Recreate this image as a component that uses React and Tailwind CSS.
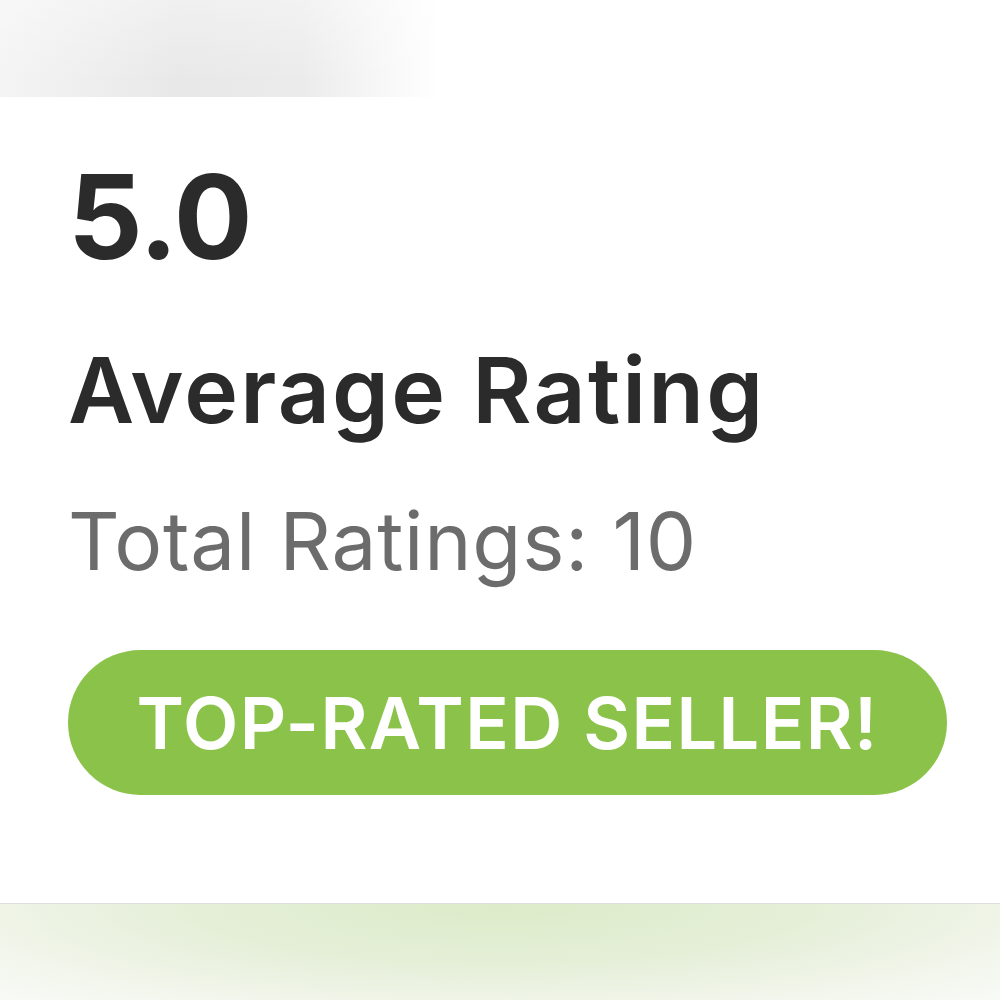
import React from 'react';

const App = () => {
    return (
        <div className="w-[1000px] h-[1000px] flex flex-col bg-white overflow-hidden" style={{ fontFamily: 'Inter, "Liberation Sans", sans-serif' }}>
            {/* top strip */}
            <div className="h-[97px] shrink-0 bg-[linear-gradient(to_right,#f4f4f4_0%,#e8e8e8_18%,#ebebeb_30%,#f7f7f7_38%,#ffffff_44%)]">
                <div className="h-full bg-[linear-gradient(to_bottom,rgba(255,255,255,0.35),rgba(255,255,255,0)_85%)]" />
            </div>

            {/* panel */}
            <div className="flex-1 flex flex-col pl-[68px] pt-[61px]">
                <div className="text-[117px] leading-none font-bold text-[#2b2b2b] tracking-[-1px]">5.0</div>
                <div className="mt-[70px] text-[91px] leading-none font-semibold text-[#2b2b2b] tracking-[2.2px]">Average Rating</div>
                <div className="mt-[65px] text-[80px] leading-none font-normal text-[#6c6c6c] tracking-[0.8px]">Total Ratings: 10</div>
                <div className="mt-[69px] w-[879px] h-[145px] rounded-full bg-[#8bc34a] flex items-center justify-center">
                    <span className="text-[72px] leading-none font-semibold text-white tracking-[1.4px]">TOP-RATED SELLER!</span>
                </div>
            </div>

            {/* bottom strip */}
            <div className="h-[97px] shrink-0 border-t border-[#dedfdb] bg-[radial-gradient(ellipse_70%_140%_at_50%_0%,#dcebc8_0%,#e5efd8_45%,#f2f6ec_80%,#f8faf6_100%)]" />
        </div>
    );
};

export default App;
